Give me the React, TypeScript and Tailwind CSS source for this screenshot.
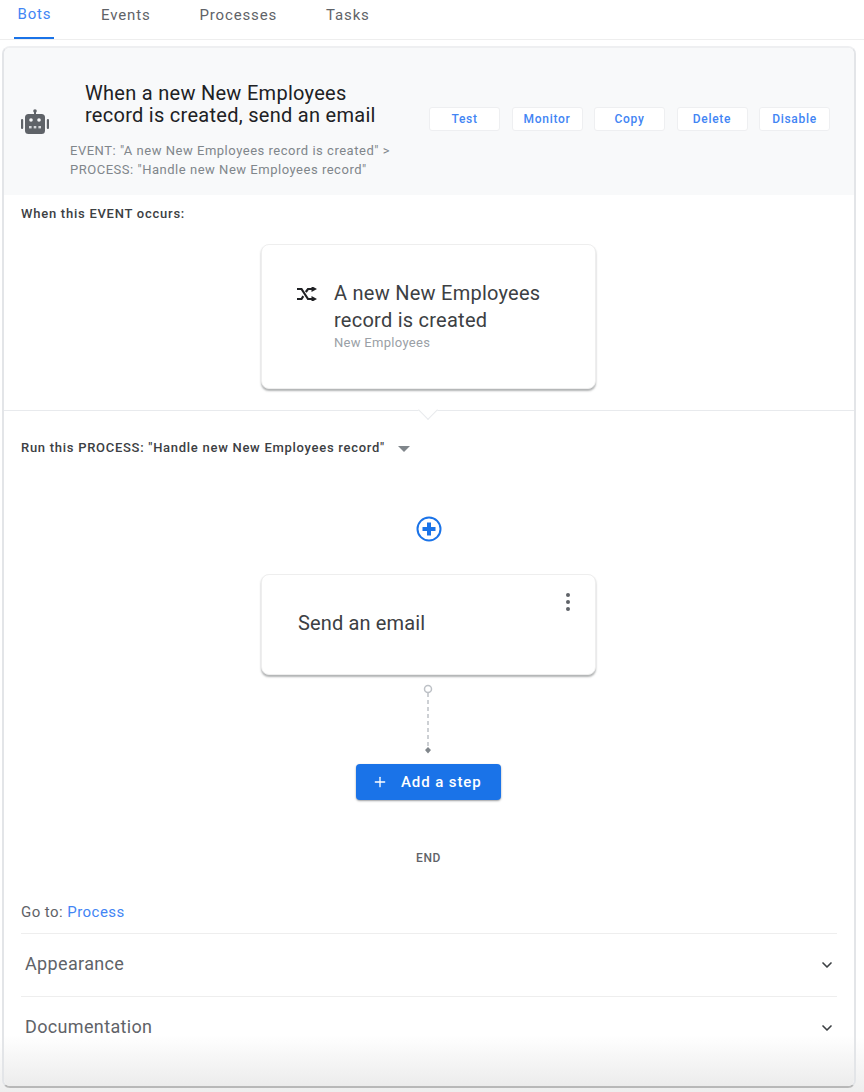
import React from "react";
import { ChevronDown, Plus } from "lucide-react";

const TABS = ["Bots", "Events", "Processes", "Tasks"];
const ACTIONS = ["Test", "Monitor", "Copy", "Delete", "Disable"];

function RobotIcon() {
  return (
    <svg width="28" height="25" viewBox="0 0 28 25" className="shrink-0 text-[#5f6368]" fill="currentColor">
      <circle cx="14" cy="2" r="1.800" />
      <rect x="13" y="2" width="2" height="4" />
      <rect x="4" y="5" width="20" height="20" rx="3.500" />
      <rect x="0" y="10" width="2.200" height="10" rx="1" />
      <rect x="25.800" y="10" width="2.200" height="10" rx="1" />
      <circle cx="10" cy="11" r="1.800" fill="#f8f9fa" />
      <circle cx="18" cy="11" r="1.800" fill="#f8f9fa" />
      <rect x="8" y="17" width="2.600" height="2.400" fill="#d5d7da" />
      <rect x="12.700" y="17" width="2.600" height="2.400" fill="#d5d7da" />
      <rect x="17.400" y="17" width="2.600" height="2.400" fill="#d5d7da" />
    </svg>
  );
}

function ShuffleIcon() {
  return (
    <svg width="20" height="14" viewBox="0 0 20 14" className="shrink-0 text-[#202124]" fill="none" stroke="currentColor" strokeWidth="2.200">
      <path d="M0 2h4.500l6.500 10h4" />
      <path d="M0 12h4.500l1.800-2.800M8.800 5l2.200-3h4" />
      <path d="M14.500 -1l5.500 3-5.500 3zM14.500 9l5.500 3-5.500 3z" fill="currentColor" stroke="none" />
    </svg>
  );
}

function AddCircleIcon() {
  return (
    <svg width="26" height="26" viewBox="0 0 26 26" fill="none">
      <circle cx="13" cy="13" r="11.500" stroke="#1a73e8" strokeWidth="2" />
      <path d="M13 6.500v13M6.500 13h13" stroke="#1a73e8" strokeWidth="4" />
    </svg>
  );
}

function Connector() {
  return (
    <svg width="12" height="72" viewBox="0 0 12 72" fill="none" className="block">
      <circle cx="6" cy="5" r="3.500" stroke="#bdc1c6" strokeWidth="1.500" />
      <path d="M6 9v57" stroke="#bdc1c6" strokeWidth="1.500" strokeDasharray="4 3" />
      <path d="M3 66h6l-3 3.500zM3 66l3-3 3 3z" fill="#80868b" />
    </svg>
  );
}

function FlowCard({ children, className }: { children: React.ReactNode; className: string }) {
  return (
    <div className={`relative w-[335px] rounded-lg border border-[#eeeeee] bg-white shadow-[0_2px_2px_rgba(60,64,67,0.4)] ${className}`}>
      {children}
    </div>
  );
}

function SectionRow({ label }: { label: string }) {
  return (
    <div className="flex h-[63px] items-center justify-between border-t border-[#eeeeee] pl-1 pr-0.5">
      <span className="mb-1 text-[18px] tracking-[0.35px] text-[#5f6368]">{label}</span>
      <ChevronDown size={16} strokeWidth={2.500} className="text-[#3c4043]" />
    </div>
  );
}

export default function App() {
  return (
    <div className="h-[1092px] w-[864px] overflow-hidden bg-white bg-gradient-to-b from-white from-[95%] to-[#eeeeee] font-['Roboto',sans-serif]">
      {/* Tabs */}
      <nav className="flex h-10 items-stretch border-b border-[#eeeeee] pl-3.5 text-[15px] tracking-[0.85px] text-[#5f6368]">
        {TABS.map((tab, i) => (
          <div
            key={tab}
            className={
              i === 0
                ? "mr-[47px] flex w-10 items-center justify-center border-b-2 border-[#1a73e8] pb-[9px] pl-px text-[#4285f4]"
                : "mr-[49px] flex items-center pb-[9px]"
            }
          >
            {tab}
          </div>
        ))}
      </nav>

      {/* Main card */}
      <div className="pl-0.5 pr-2 pt-1.5">
        <div className="flex h-[1042px] flex-col overflow-hidden rounded-lg border-x-2 border-b-2 border-t-2 border-x-[#e3e5e8] border-b-[#b8b8b8] border-t-[#eeeff1] bg-white">
          {/* Header */}
          <header className="flex h-[147px] shrink-0 items-center bg-[#f8f9fa] pl-[17px]">
            <RobotIcon />
            <div className="ml-[21px] mt-[18px]">
              <div className="ml-[15px] text-[20px] leading-[22px] tracking-[0.28px] text-[#202124]">
                When a new New Employees
                <br />
                record is created, send an email
              </div>
              <div className="mt-[15px] text-[13px] leading-[19px] tracking-[0.52px] text-[#80868b]">
                EVENT: "A new New Employees record is created" &gt;
                <br />
                PROCESS: "Handle new New Employees record"
              </div>
            </div>
            <div className="mt-[59px] ml-auto mr-6 flex gap-[11.500px] self-start">
              {ACTIONS.map((action) => (
                <button
                  key={action}
                  className="h-6 w-[71px] rounded-[3px] border border-[#eeeff1] bg-white text-xs font-medium tracking-[0.7px] text-[#4285f4]"
                >
                  {action}
                </button>
              ))}
            </div>
          </header>

          {/* Event */}
          <div className="h-[215px] shrink-0 pl-[17px] pt-3">
            <div className="text-[13px] font-medium leading-[14px] tracking-[0.75px] text-[#3c4043]">When this EVENT occurs:</div>
            <FlowCard className="ml-[240px] mt-[23px] h-[145px]">
              <div className="flex pl-[35px] pt-[35px]">
                <div className="mt-[7px] w-[37px]">
                  <ShuffleIcon />
                </div>
                <div>
                  <div className="text-[20px] leading-[27px] tracking-[0.25px] text-[#3c4043]">
                    A new New Employees
                    <br />
                    record is created
                  </div>
                  <div className="text-[13px] leading-[18px] tracking-[0.3px] text-[#9aa0a6]">New Employees</div>
                </div>
              </div>
            </FlowCard>
          </div>

          {/* Process */}
          <div className="relative shrink-0 border-t border-[#e8eaed] pt-[30px]">
            <div className="absolute left-[417px] top-[-8px] size-[14px] rotate-45 border-b border-r border-[#e8eaed] bg-white" />
            <div className="flex items-center pl-[17px]">
              <span className="text-[13px] font-medium leading-[14px] tracking-[0.72px] text-[#3c4043]">
                Run this PROCESS: "Handle new New Employees record"
              </span>
              <span className="ml-[13px] mt-0.5 size-0 border-x-[6px] border-t-[6px] border-x-transparent border-t-[#80868b]" />
            </div>

            <div className="flex flex-col items-center pr-px">
              <div className="mt-[61px]">
                <AddCircleIcon />
              </div>
              <FlowCard className="mt-[32px] h-[101px]">
                <div className="pl-[36px] pt-[35px] text-[20px] leading-[27px] tracking-[0.15px] text-[#3c4043]">Send an email</div>
                <div className="absolute right-[25px] top-[18px] flex flex-col gap-[3px]">
                  <span className="size-1 rounded-full bg-[#5f6368]" />
                  <span className="size-1 rounded-full bg-[#5f6368]" />
                  <span className="size-1 rounded-full bg-[#5f6368]" />
                </div>
              </FlowCard>
              <div className="mr-0.5 mt-[9px]">
                <Connector />
              </div>
              <button className="mt-2 flex h-9 w-[145px] items-center rounded bg-[#1a73e8] pl-4 text-[15px] font-medium tracking-[0.9px] text-white shadow-[0_1px_2px_rgba(60,64,67,0.5)]">
                <Plus size={16} strokeWidth={2} />
                <span className="ml-[13px]">Add a step</span>
              </button>
              <div className="mt-[51px] text-xs font-medium leading-[14px] tracking-[0.55px] text-[#5f6368]">END</div>
            </div>
          </div>

          {/* Footer */}
          <div className="min-h-0 flex-1 bg-gradient-to-b from-white from-[77%] to-[#ececec] px-[17px] pt-[39px]">
            <div className="h-[29px] text-[15px] leading-4 tracking-[0.45px] text-[#5f6368]">
              Go to: <span className="text-[#4285f4]">Process</span>
            </div>
            <SectionRow label="Appearance" />
            <SectionRow label="Documentation" />
          </div>
        </div>
      </div>
    </div>
  );
}
